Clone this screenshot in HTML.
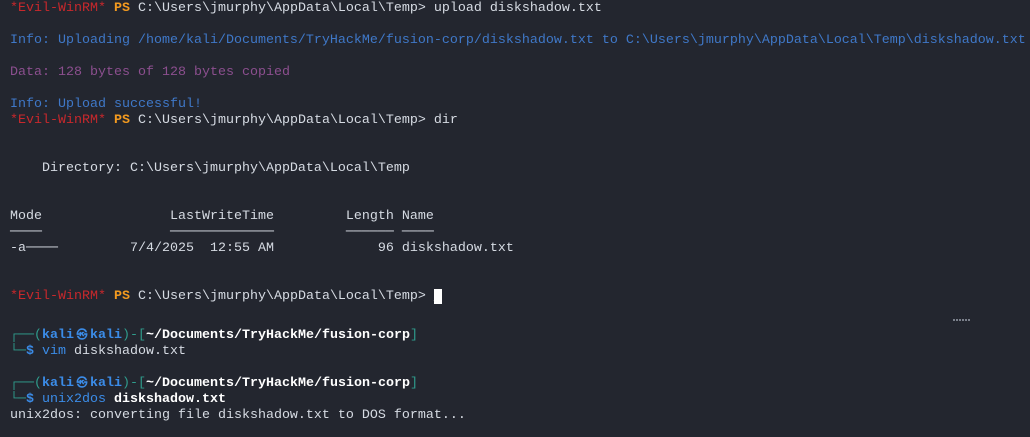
<!DOCTYPE html>
<html><head><meta charset="utf-8"><style>
html,body{margin:0;padding:0;background:#23262f;width:1030px;height:437px;overflow:hidden}
pre{margin:0;position:absolute;left:10px;font-family:"Liberation Mono",monospace;font-size:13.33px;line-height:16px;color:#d6dbe3;white-space:pre}
.r{color:#c8282c}.o{color:#f39a1f;font-weight:bold}.b{color:#3f78c8}.p{color:#8c4f8f}
.g{color:#2f9c8c}.k{color:#3b8ce8;font-weight:bold}.w{color:#fff;font-weight:bold}.c{color:#3b8ce8}
.cur{background:#fff;color:#fff}
.at{display:inline-block;width:16px;text-align:center;font-size:11px;overflow:hidden;vertical-align:top}
.dots{position:absolute;left:953px;top:319px;width:17px;height:2px;background:repeating-linear-gradient(90deg,#7a7f8a 0 2px,transparent 2px 3px)}
</style></head><body>
<pre style="top:1px"><span class="r">*Evil-WinRM*</span> <span class="o">PS</span> C:\Users\jmurphy\AppData\Local\Temp&gt; upload diskshadow.txt

<span class="b">Info: Uploading /home/kali/Documents/TryHackMe/fusion-corp/diskshadow.txt to C:\Users\jmurphy\AppData\Local\Temp\diskshadow.txt</span>

<span class="p">Data: 128 bytes of 128 bytes copied</span>

<span class="b">Info: Upload successful!</span>
<span class="r">*Evil-WinRM*</span> <span class="o">PS</span> C:\Users\jmurphy\AppData\Local\Temp&gt; dir


    Directory: C:\Users\jmurphy\AppData\Local\Temp


Mode                LastWriteTime         Length Name
────                ─────────────         ────── ────
-a────         7/4/2025  12:55 AM             96 diskshadow.txt


<span class="r">*Evil-WinRM*</span> <span class="o">PS</span> C:\Users\jmurphy\AppData\Local\Temp&gt; <span class="cur">_</span></pre>
<div class="dots"></div>
<pre style="top:328px"><span class="g">┌──(</span><span class="k">kali<span class="at">㉿</span>kali</span><span class="g">)-[</span><span class="w">~/Documents/TryHackMe/fusion-corp</span><span class="g">]</span>
<span class="g">└─</span><span class="k">$</span> <span class="c">vim</span> diskshadow.txt

<span class="g">┌──(</span><span class="k">kali<span class="at">㉿</span>kali</span><span class="g">)-[</span><span class="w">~/Documents/TryHackMe/fusion-corp</span><span class="g">]</span>
<span class="g">└─</span><span class="k">$</span> <span class="c">unix2dos</span> <span class="w">diskshadow.txt</span>
unix2dos: converting file diskshadow.txt to DOS format...</pre>
</body></html>
